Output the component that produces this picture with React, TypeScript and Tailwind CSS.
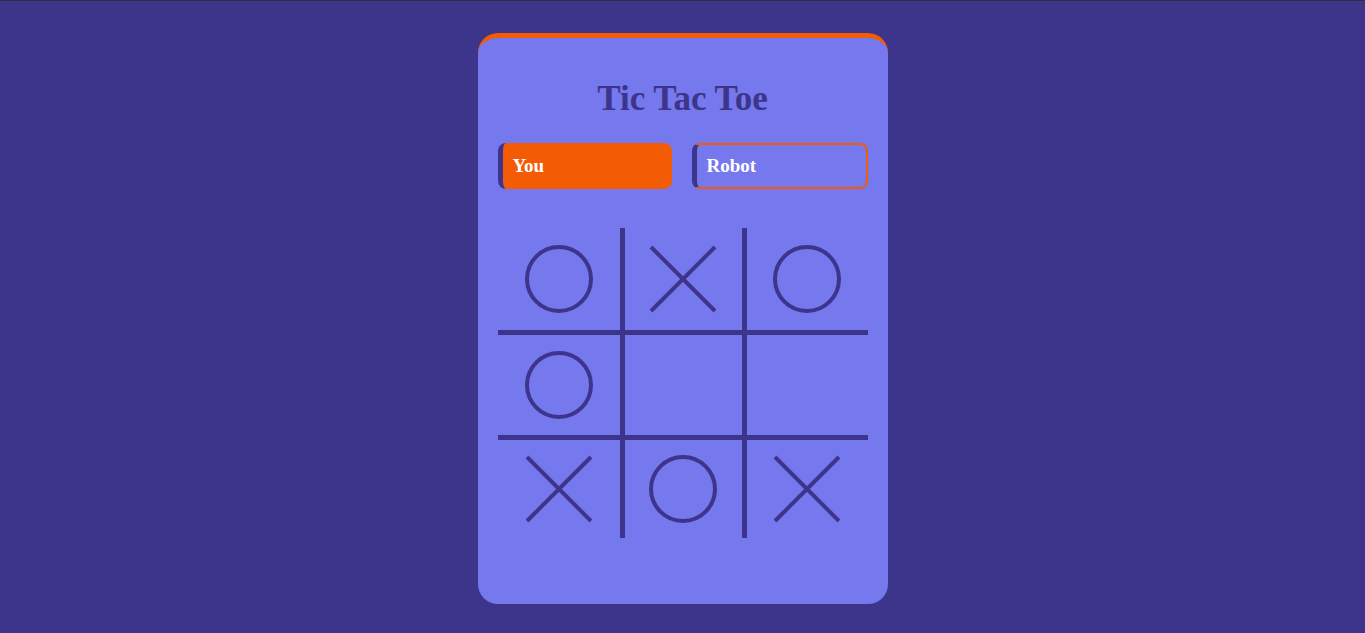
import React from 'react';

type Mark = 'X' | 'O' | '';

const BOARD: Mark[] = ['O', 'X', 'O', 'O', '', '', 'X', 'O', 'X'];

const Circle = () => (
  <svg width="70" height="70" viewBox="0 0 70 70" fill="none">
    <circle cx="35" cy="35" r="32" stroke="#3d348b" strokeWidth="4" />
  </svg>
);

const Cross = () => (
  <svg width="70" height="70" viewBox="0 0 70 70" fill="none">
    <path d="M3 3 L67 67 M67 3 L3 67" stroke="#3d348b" strokeWidth="4" />
  </svg>
);

const Cell = ({ mark, index }: { mark: Mark; index: number }) => {
  const col = index % 3;
  const row = Math.floor(index / 3);
  const borders = [
    col < 2 ? 'border-r-[5px]' : '',
    row < 2 ? 'border-b-[5px]' : '',
  ].join(' ');
  return (
    <div className={`flex items-center justify-center border-[#3d348b] ${borders}`}>
      {mark === 'O' && <Circle />}
      {mark === 'X' && <Cross />}
    </div>
  );
};

export default function App() {
  return (
    <div className="min-h-[633px] bg-[#3d348b] border-t border-[#2e2e3a] flex justify-center" style={{ fontFamily: '"Liberation Serif", "DejaVu Serif", serif' }}>
      <div className="mt-[32px] w-[410px] h-[571px] bg-[#7678ed] rounded-[20px] border-t-[5px] border-[#f35b04] px-5">
        <h1 className="text-center text-[35px] font-bold text-[#3d348b] mt-[41px] leading-[40px]">Tic Tac Toe</h1>
        <div className="flex gap-5 mt-[24px]">
          <div className="w-[174px] h-[46px] bg-[#f35b04] rounded-lg border-l-[5px] border-[#3d348b] flex items-center pl-[10px] text-white font-bold text-[19px]">
            You
          </div>
          <div className="w-[176px] h-[46px] rounded-lg border-2 border-l-[5px] border-[#f35b04] border-l-[#3d348b] flex items-center pl-[10px] text-white font-bold text-[19px]">
            Robot
          </div>
        </div>
        <div className="mt-[39px] grid grid-cols-[127px_122px_121px] grid-rows-[107px_105px_98px] w-[370px]">
          {BOARD.map((m, i) => (
            <Cell key={i} mark={m} index={i} />
          ))}
        </div>
      </div>
    </div>
  );
}
